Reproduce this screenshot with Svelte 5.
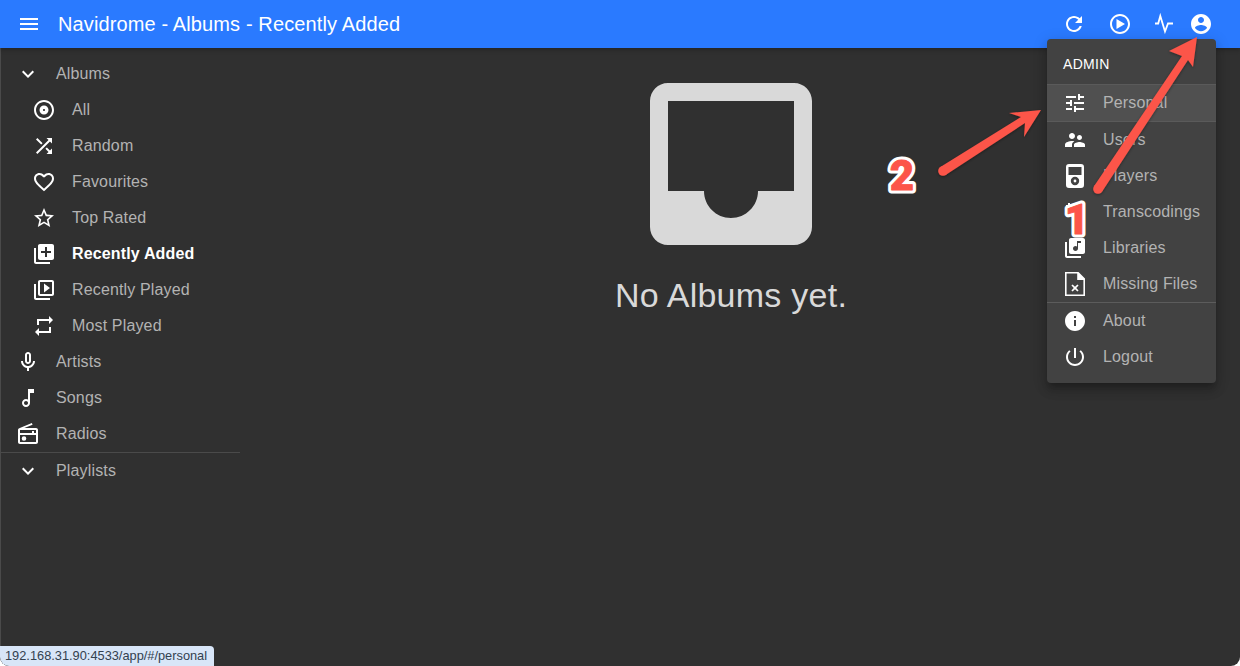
<script>
  const ICONS = {
    menu: 'M3 18h18v-2H3v2zm0-5h18v-2H3v2zm0-7v2h18V6H3z',
    expand: 'M16.59 8.59L12 13.17 7.41 8.59 6 10l6 6 6-6z',
    album: 'M12 2C6.48 2 2 6.48 2 12s4.48 10 10 10 10-4.48 10-10S17.52 2 12 2zm0 18c-4.41 0-8-3.59-8-8s3.59-8 8-8 8 3.59 8 8-3.59 8-8 8zm0-12.5c-2.49 0-4.5 2.01-4.5 4.5s2.01 4.5 4.5 4.5 4.5-2.01 4.5-4.5-2.01-4.5-4.5-4.5zm0 5.5c-.55 0-1-.45-1-1s.45-1 1-1 1 .45 1 1-.45 1-1 1z',
    shuffle: 'M10.59 9.17L5.41 4 4 5.41l5.17 5.17 1.42-1.41zM14.5 4l2.04 2.04L4 18.59 5.41 20 17.96 7.46 20 9.5V4h-5.5zm.33 9.41l-1.41 1.41 3.13 3.13L14.5 20H20v-5.5l-2.04 2.04-3.13-3.13z',
    heart: 'M16.5 3c-1.74 0-3.41.81-4.5 2.09C10.91 3.81 9.24 3 7.5 3 4.42 3 2 5.42 2 8.5c0 3.78 3.4 6.86 8.55 11.54L12 21.35l1.45-1.32C18.6 15.36 22 12.28 22 8.5 22 5.42 19.58 3 16.5 3zm-4.4 15.55l-.1.1-.1-.1C7.14 14.24 4 11.39 4 8.5 4 6.5 5.5 5 7.5 5c1.54 0 3.04.99 3.57 2.36h1.87C13.46 5.99 14.96 5 16.5 5c2 0 3.5 1.5 3.5 3.5 0 2.89-3.14 5.74-7.9 10.05z',
    star: 'M22 9.24l-7.19-.62L12 2 9.19 8.63 2 9.24l5.46 4.73L5.82 21 12 17.27 18.18 21l-1.63-7.03L22 9.24zM12 15.4l-3.76 2.27 1-4.28-3.32-2.88 4.38-.38L12 6.1l1.71 4.04 4.38.38-3.32 2.88 1 4.28L12 15.4z',
    libAdd: 'M4 6H2v14c0 1.1.9 2 2 2h14v-2H4V6zm16-4H8c-1.1 0-2 .9-2 2v12c0 1.1.9 2 2 2h12c1.1 0 2-.9 2-2V4c0-1.1-.9-2-2-2zm-1 9h-4v4h-2v-4H9V9h4V5h2v4h4v2z',
    libPlay: 'M4 6H2v14c0 1.1.9 2 2 2h14v-2H4V6zm16-4H8c-1.1 0-2 .9-2 2v12c0 1.1.9 2 2 2h12c1.1 0 2-.9 2-2V4c0-1.1-.9-2-2-2zm0 14H8V4h12v12zM12 5.5v9l6-4.5z',
    repeat: 'M7 7h10v3l4-4-4-4v3H5v6h2V7zm10 10H7v-3l-4 4 4 4v-3h12v-6h-2v4z',
    mic: 'M12 14c1.66 0 3-1.34 3-3V5c0-1.66-1.34-3-3-3S9 3.34 9 5v6c0 1.66 1.34 3 3 3zm-1-9c0-.55.45-1 1-1s1 .45 1 1v6c0 .55-.45 1-1 1s-1-.45-1-1V5zm6 6c0 2.76-2.24 5-5 5s-5-2.24-5-5H5c0 3.53 2.61 6.43 6 6.92V21h2v-3.08c3.39-.49 6-3.39 6-6.92h-2z',
    note: 'M12 3l.01 10.55c-.59-.34-1.27-.55-2-.55C7.79 13 6 14.79 6 17s1.79 4 4.01 4S14 19.21 14 17V7h4V3h-6zm-1.99 16c-1.1 0-2-.9-2-2s.9-2 2-2 2 .9 2 2-.9 2-2 2z',
    radio: 'M20 6H8.3l8.26-3.34L15.88 1 3.24 6.15C2.51 6.43 2 7.17 2 8v12c0 1.1.89 2 2 2h16c1.11 0 2-.9 2-2V8c0-1.11-.89-2-2-2zm0 2v3h-2V9h-2v2H4V8h16zM4 20v-7h16v7H4zM8 14.2a2.3 2.3 0 1 0 0 4.6 2.3 2.3 0 0 0 0-4.6z',
    refresh: 'M17.65 6.35C16.2 4.9 14.21 4 12 4c-4.42 0-7.99 3.58-7.99 8s3.57 8 7.99 8c3.73 0 6.84-2.55 7.73-6h-2.08c-.82 2.33-3.04 4-5.65 4-3.31 0-6-2.69-6-6s2.69-6 6-6c1.66 0 3.14.69 4.22 1.78L13 11h7V4l-2.35 2.35z',
    play: 'M8.5 7v10l8.5-5zM12 2C6.48 2 2 6.48 2 12s4.48 10 10 10 10-4.48 10-10S17.52 2 12 2zm0 18c-4.41 0-8-3.59-8-8s3.59-8 8-8 8 3.59 8 8-3.59 8-8 8z',
    account: 'M12 2C6.48 2 2 6.48 2 12s4.48 10 10 10 10-4.48 10-10S17.52 2 12 2zm0 3c1.66 0 3 1.34 3 3s-1.34 3-3 3-3-1.34-3-3 1.34-3 3-3zm0 14.2c-2.5 0-4.71-1.28-6-3.22.03-1.99 4-3.08 6-3.08 1.99 0 5.97 1.09 6 3.08-1.29 1.94-3.5 3.22-6 3.22z',
    tune: 'M3 17v2h6v-2H3zM3 5v2h10V5H3zm10 16v-2h8v-2h-8v-2h-2v6h2zM7 9v2H3v2h4v2h2V9H7zm14 4v-2H11v2h10zm-6-4h2V7h4V5h-4V3h-2v6z',
    people: 'M16.5 12c1.38 0 2.49-1.12 2.49-2.5S17.88 7 16.5 7C15.12 7 14 8.12 14 9.5s1.12 2.5 2.5 2.5zM9 11c1.66 0 2.99-1.34 2.99-3S10.66 5 9 5C7.34 5 6 6.34 6 8s1.34 3 3 3zm7.5 3c-1.83 0-5.5.92-5.5 2.75V19h11v-2.25c0-1.83-3.67-2.75-5.5-2.75zM9 13c-2.33 0-7 1.17-7 3.5V19h7v-2.25c0-.85.33-2.34 2.37-3.47C10.5 13.1 9.66 13 9 13z',
    ipod: 'M6 0h12a3 3 0 0 1 3 3v18a3 3 0 0 1-3 3H6a3 3 0 0 1-3-3V3a3 3 0 0 1 3-3zM5.5 3v8h13V3h-13zm6.5 9.8a4.2 4.2 0 1 0 0 8.4 4.2 4.2 0 0 0 0-8.4zm0 2.8a1.4 1.4 0 1 1 0 2.8 1.4 1.4 0 0 1 0-2.8z',
    transcode: 'M5 5V3h2v2h2v2H7v2H5V7H3V5h2zm6 4h10v2H11V9zM3 13h10v2H3v-2z',
    library: 'M20 2H8c-1.1 0-2 .9-2 2v12c0 1.1.9 2 2 2h12c1.1 0 2-.9 2-2V4c0-1.1-.9-2-2-2zm-2 5h-3v5.5c0 1.38-1.12 2.5-2.5 2.5S10 13.88 10 12.5s1.12-2.5 2.5-2.5c.57 0 1.08.19 1.5.51V5h4v2zM4 6H2v14c0 1.1.9 2 2 2h14v-2H4V6z',
    missing: 'M2 0h13.5L22 6.5V24H2V0zm1.6 1.6v20.8h16.8V8h-6.2V1.6H3.6zM9.6 12.4l2.4 2.4 2.4-2.4 1.2 1.2-2.4 2.4 2.4 2.4-1.2 1.2-2.4-2.4-2.4 2.4-1.2-1.2 2.4-2.4-2.4-2.4 1.2-1.2z',
    info: 'M12 2C6.48 2 2 6.48 2 12s4.48 10 10 10 10-4.48 10-10S17.52 2 12 2zm1 15h-2v-6h2v6zm0-8h-2V7h2v2z',
    power: 'M13 3h-2v10h2V3zm4.83 2.17l-1.42 1.42C17.99 7.86 19 9.81 19 12c0 3.87-3.13 7-7 7s-7-3.13-7-7c0-2.19 1.01-4.14 2.58-5.42L6.17 5.17C4.23 6.82 3 9.26 3 12c0 4.97 4.03 9 9 9s9-4.03 9-9c0-2.74-1.23-5.18-3.17-6.83z',
    inbox: 'M19 3H5c-1.1 0-2 .9-2 2v14c0 1.1.9 2 2 2h14c1.1 0 2-.9 2-2V5c0-1.1-.9-2-2-2zm0 12h-4c0 1.66-1.35 3-3 3s-3-1.34-3-3H5V5h14v10z'
  }

  const albumItems = [
    { icon: 'album', label: 'All' },
    { icon: 'shuffle', label: 'Random' },
    { icon: 'heart', label: 'Favourites' },
    { icon: 'star', label: 'Top Rated' },
    { icon: 'libAdd', label: 'Recently Added', active: true },
    { icon: 'libPlay', label: 'Recently Played' },
    { icon: 'repeat', label: 'Most Played' }
  ]
  const topItems = [
    { icon: 'mic', label: 'Artists' },
    { icon: 'note', label: 'Songs' },
    { icon: 'radio', label: 'Radios' }
  ]
  const menuItems = [
    { icon: 'tune', label: 'Personal', hover: true },
    { icon: 'people', label: 'Users' },
    { icon: 'ipod', label: 'Players' },
    { icon: 'transcode', label: 'Transcodings' },
    { icon: 'library', label: 'Libraries' },
    { icon: 'missing', label: 'Missing Files' }
  ]
  const bottomItems = [
    { icon: 'info', label: 'About' },
    { icon: 'power', label: 'Logout' }
  ]
</script>

{#snippet icon(name)}
  <svg class="icon" viewBox="0 0 24 24"><path d={ICONS[name]} /></svg>
{/snippet}

<div class="window">
  <header class="appbar">
    <button class="menu-btn">{@render icon('menu')}</button>
    <h1>Navidrome - Albums - Recently Added</h1>
    <div class="actions">
      <button>{@render icon('refresh')}</button>
      <button>{@render icon('play')}</button>
      <button>
        <svg class="icon" viewBox="0 0 24 24"><path class="pulse" d="M3 11.5h3.2L8.3 4 13 19.5l3-8h5" /></svg>
      </button>
      <button>{@render icon('account')}</button>
    </div>
  </header>

  <div class="body">
    <nav class="sidebar">
      <div class="row">{@render icon('expand')}<span>Albums</span></div>
      {#each albumItems as item}
        <div class="row sub" class:active={item.active}>{@render icon(item.icon)}<span>{item.label}</span></div>
      {/each}
      {#each topItems as item}
        <div class="row">{@render icon(item.icon)}<span>{item.label}</span></div>
      {/each}
      <div class="row last">{@render icon('expand')}<span>Playlists</span></div>
    </nav>

    <main class="empty">
      <svg class="inbox" viewBox="0 0 24 24"><path d={ICONS.inbox} /></svg>
      <p>No Albums yet.</p>
    </main>
  </div>

  <div class="popover">
    <div class="username">ADMIN</div>
    {#each menuItems as item}
      <div class="mitem" class:hover={item.hover}>{@render icon(item.icon)}<span>{item.label}</span></div>
    {/each}
    <div class="sep">
      {#each bottomItems as item}
        <div class="mitem">{@render icon(item.icon)}<span>{item.label}</span></div>
      {/each}
    </div>
  </div>

  <svg class="arrows" viewBox="0 0 1240 666" width="1240" height="666">
    <defs>
      <filter id="sh" x="-20%" y="-20%" width="140%" height="140%">
        <feDropShadow dx="0" dy="1" stdDeviation="1.5" flood-color="#000" flood-opacity="0.4" />
      </filter>
    </defs>
    <g filter="url(#sh)" fill="#fc5549">
      <circle cx="1098" cy="189" r="4.8" />
      <path d="M1102 191.7L1188 60L1193 67L1197 37L1169 51L1182 56L1094 186.3Z" />
      <circle cx="943" cy="171" r="4.8" />
      <path d="M945.6 175L1025 123L1024 137L1041 110L1009 113L1021 117L940.4 167Z" />
    </g>
    <text class="num back" x="902" y="189.5">2</text>
    <text class="num" x="902" y="189.5">2</text>
    <text class="num back" x="1077" y="233.5">1</text>
    <text class="num" x="1077" y="233.5">1</text>
  </svg>

  <div class="status">192.168.31.90:4533/app/#/personal</div>
</div>

<style>
  :global(body) {
    margin: 0;
    background: #fff;
  }
  .window {
    position: relative;
    width: 1240px;
    height: 666px;
    overflow: hidden;
    background: #303030;
    font-family: "Liberation Sans", Arial, sans-serif;
    display: flex;
    flex-direction: column;
    box-shadow: inset 1px 0 0 #4a4a4a;
    border-radius: 0 0 9px 9px;
  }
  .icon {
    width: 24px;
    height: 24px;
    fill: #fff;
    flex: none;
    display: block;
  }
  .pulse {
    fill: none;
    stroke: #fff;
    stroke-width: 1.8;
  }
  button {
    border: 0;
    padding: 0;
    background: none;
    display: block;
  }
  .appbar {
    height: 48px;
    flex: none;
    background: #2a7aff;
    display: flex;
    align-items: center;
    color: #fff;
    padding: 0 27px 0 17px;
    box-shadow: 0 2px 4px rgba(0, 0, 0, 0.25);
    position: relative;
  }
  h1 {
    margin: 0 0 0 17px;
    font-size: 20px;
    font-weight: 400;
    letter-spacing: 0.12px;
    flex: 1;
    line-height: 48px;
  }
  .actions {
    display: flex;
  }
  .actions button:nth-child(2) {
    margin-left: 22px;
  }
  .actions button:nth-child(3) {
    margin-left: 20px;
  }
  .actions button:nth-child(4) {
    margin-left: 13px;
  }
  .body {
    flex: 1;
    display: flex;
  }
  .sidebar {
    width: 240px;
    flex: none;
    padding-top: 8px;
  }
  .row {
    display: flex;
    align-items: center;
    height: 36px;
    padding-left: 16px;
    color: #b3b3b3;
    font-size: 16px;
    letter-spacing: 0.15px;
  }
  .row > span,
  .mitem > span {
    margin-left: 16px;
  }
  .row.sub {
    padding-left: 32px;
  }
  .row.active {
    color: #fff;
    font-weight: 700;
  }
  .row.last {
    border-top: 1px solid #4a4a4a;
  }
  .empty {
    width: 982px;
    display: flex;
    flex-direction: column;
    align-items: center;
    color: #d9d9d9;
  }
  .inbox {
    width: 216px;
    height: 216px;
    margin-top: 8px;
    fill: #d9d9d9;
    display: block;
  }
  .empty p {
    margin: 3px 0 0;
    font-size: 34px;
    line-height: 40px;
    letter-spacing: 0.25px;
  }
  .popover {
    position: absolute;
    left: 1047px;
    top: 39px;
    width: 169px;
    height: 344px;
    box-sizing: border-box;
    background: #424242;
    border-radius: 4px;
    box-shadow: 0 5px 5px -3px rgba(0, 0, 0, 0.2), 0 8px 10px 1px rgba(0, 0, 0, 0.14), 0 3px 14px 2px rgba(0, 0, 0, 0.12);
    padding-top: 8px;
  }
  .username {
    height: 36px;
    line-height: 34px;
    padding-left: 16px;
    color: #fff;
    font-size: 14px;
    letter-spacing: 0.3px;
    margin-bottom: 1px;
  }
  .mitem {
    display: flex;
    align-items: center;
    height: 36px;
    padding-left: 16px;
    color: #b3b3b3;
    font-size: 16px;
    letter-spacing: 0.15px;
  }
  .mitem > span {
    margin-left: 16px;
  }
  .mitem.hover {
    background: #505050;
    border-top: 1px solid #5a5a5a;
    border-bottom: 1px solid #5a5a5a;
  }
  .sep {
    border-top: 1px solid #5c5c5c;
  }
  .arrows {
    position: absolute;
    left: 0;
    top: 0;
    pointer-events: none;
  }
  .num {
    font-family: Roboto, "Liberation Sans", sans-serif;
    font-weight: 900;
    font-size: 42px;
    text-anchor: middle;
    fill: #fc5549;
    stroke: #fc5549;
    stroke-width: 0.8px;
    stroke-linejoin: round;
  }
  .num.back {
    fill: #fff;
    stroke: #fff;
    stroke-width: 7px;
  }
  .status {
    position: absolute;
    left: 0;
    bottom: 0;
    height: 20px;
    line-height: 20px;
    padding: 0 7px 0 5px;
    background: #d8e6f8;
    color: #33414f;
    font-size: 12.8px;
    border-radius: 0 4px 0 0;
  }
</style>
